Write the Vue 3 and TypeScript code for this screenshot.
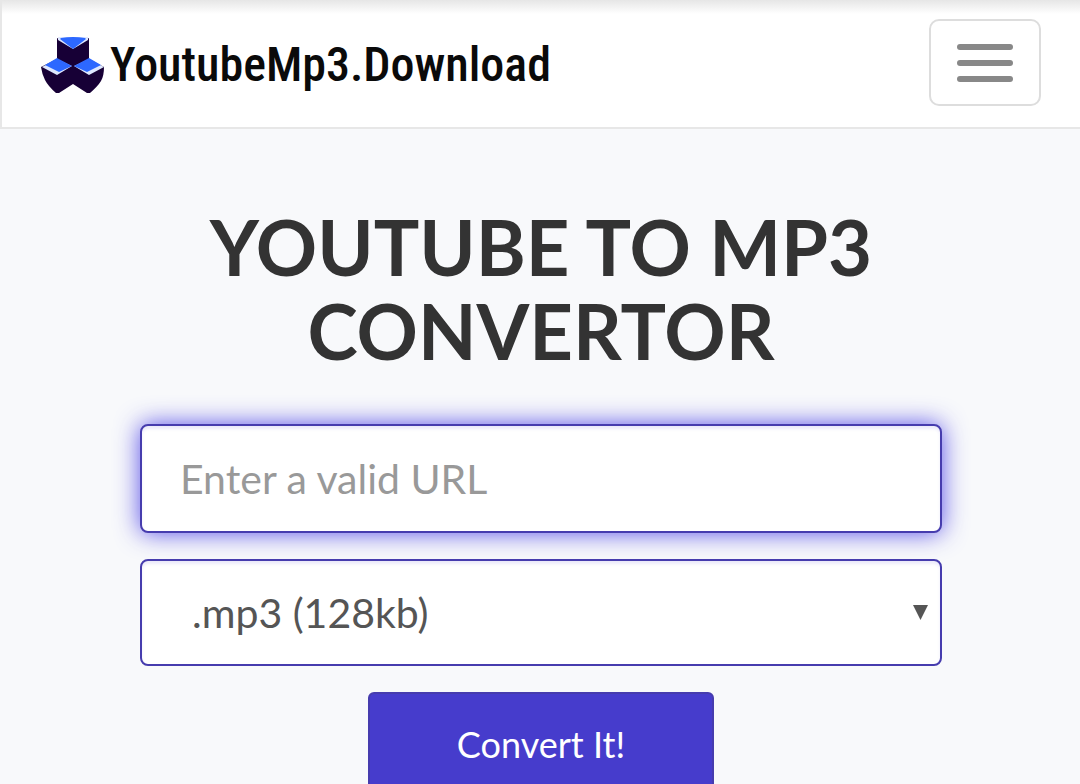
<script setup lang="ts">
import { ref } from 'vue'

const url = ref('')
const format = ref('mp3-128')
const formats = [{ value: 'mp3-128', label: '.mp3 (128kb)' }]
</script>

<template>
  <div class="page">
    <header class="navbar">
      <a class="brand" href="#">
        <svg class="mark" viewBox="0 0 64 56" aria-hidden="true">
          <path fill="#170036" d="M16 1 32 9 48 1V22L63 30Q63 39 60 44T49 56H46L32 47 18 56H15Q7 49 4 43T0 30L16 22Z" />
          <path fill="#dfe8ff" d="M17 0H47V3L32 12 17 3ZM1 30 16 22 31 29 16 38ZM33 29 48 22 63 30 48 38Z" />
          <path fill="#2d68ff" d="M20 1Q32-1 44 1L45 2 32 12 19 2ZM4 28 16 21 31 29 18 35ZM33 29 48 21 60 28 46 35Z" />
        </svg>
        <span class="name">YoutubeMp3.Download</span>
      </a>
      <button class="toggle" type="button" aria-label="Toggle navigation">
        <span class="bar"></span>
        <span class="bar"></span>
        <span class="bar"></span>
      </button>
    </header>

    <main class="content">
      <h1 class="title">YOUTUBE TO MP3 CONVERTOR</h1>
      <form class="form" @submit.prevent>
        <input v-model="url" class="field url" type="text" placeholder="Enter a valid URL" aria-label="Video URL" />
        <div class="select-wrap">
          <select v-model="format" class="field format" aria-label="Format">
            <option v-for="f in formats" :key="f.value" :value="f.value">{{ f.label }}</option>
          </select>
          <svg class="arrow" viewBox="0 0 15 15" aria-hidden="true"><path fill="#555" d="M0 0H15L7.500 15Z" /></svg>
        </div>
        <button class="submit" type="submit">Convert It!</button>
      </form>
    </main>
  </div>
</template>

<style>
html {
  scrollbar-width: none;
  background: #f8f9fb;
}

body {
  margin: 0;
}
</style>

<style scoped>
.page {
  font-family: Lato, sans-serif;
  color: #333;
  background: #f8f9fb;
}

.page * {
  box-sizing: border-box;
}

.navbar {
  display: flex;
  align-items: flex-start;
  justify-content: space-between;
  padding: 19px 39px 21px;
  border-left: 2px solid #e7e7e7;
  border-bottom: 2px solid #e7e7e7;
  background: linear-gradient(#e6e6e6, #fff 14px);
}

.brand {
  display: flex;
  align-items: center;
  gap: 5px;
  padding-top: 16px;
  color: #0a0a0a;
  text-decoration: none;
}

.mark {
  flex: none;
  width: 64px;
  height: 56px;
}

.name {
  font-family: "Roboto Condensed", "Liberation Sans Narrow", sans-serif;
  font-size: 48px;
  font-weight: 500;
  line-height: 60px;
  white-space: nowrap;
}

.toggle {
  display: flex;
  flex-direction: column;
  align-items: center;
  justify-content: center;
  gap: 10px;
  width: 112px;
  height: 87px;
  padding: 0;
  border: 2px solid #ddd;
  border-radius: 10px;
  background: transparent;
}

.bar {
  width: 56px;
  height: 6px;
  border-radius: 3px;
  background: #888;
}

.content {
  padding: 76px 138px 0 140px;
}

.title {
  margin: 0;
  font-size: 76px;
  font-weight: 700;
  line-height: 84px;
  text-align: center;
}

.form {
  display: flex;
  flex-direction: column;
  align-items: center;
  gap: 26px;
  padding-top: 51px;
}

.field {
  display: block;
  width: 100%;
  border: 2px solid #463cae;
  border-radius: 8px;
  background: #fff;
  color: #555;
  font-family: inherit;
  font-size: 41px;
  outline: none;
}

.url {
  height: 109px;
  padding: 0 38px;
  box-shadow: inset 0 3px 3px rgba(70, 60, 204, 0.1), 0 0 24px rgba(70, 60, 230, 0.9);
}

.url::placeholder {
  color: #999;
  opacity: 1;
}

.select-wrap {
  position: relative;
  width: 100%;
}

.format {
  height: 107px;
  padding: 0 50px;
  appearance: none;
  box-shadow: inset 0 3px 3px rgba(70, 60, 204, 0.1);
}

.arrow {
  position: absolute;
  top: 46px;
  right: 14px;
  width: 15px;
  height: 15px;
  pointer-events: none;
}

.submit {
  width: 346px;
  height: 104px;
  padding: 0;
  border: 2px solid #463cae;
  border-radius: 6px;
  background: #463ccc;
  color: #fff;
  font-family: inherit;
  font-size: 36px;
}
</style>
